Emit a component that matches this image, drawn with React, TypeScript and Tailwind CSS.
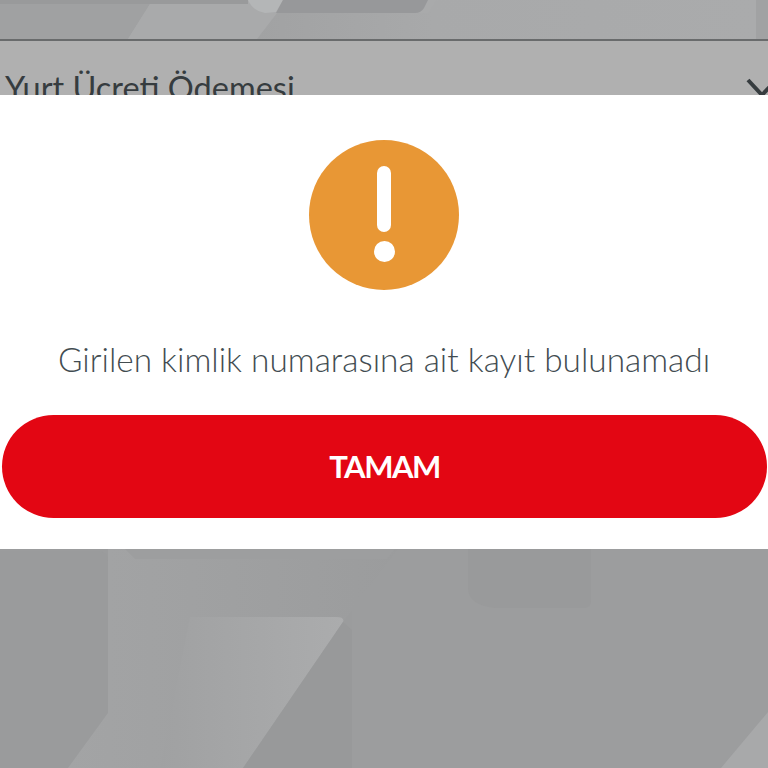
const font = "font-['Lato','Open_Sans',sans-serif]";

function TopPattern() {
  return (
    <svg width="768" height="39" viewBox="0 0 768 39" className="block">
      <defs>
        <linearGradient id="topRight" x1="0" x2="1" y1="0" y2="0">
          <stop offset="0" stopColor="#a1a2a3" />
          <stop offset="0.35" stopColor="#a8a9aa" />
          <stop offset="1" stopColor="#aaabac" />
        </linearGradient>
      </defs>
      <rect width="768" height="39" fill="#a9aaab" />
      <polygon points="0,4 150,4 128,39 0,39" fill="#a0a1a2" />
      <polygon points="150,4 248,4 277,13 257,39 128,39" fill="#a9aaab" />
      <polygon points="277,13 428,13 436,0 756,0 756,39 257,39" fill="url(#topRight)" />
      <path d="M0 0h248v4H0z" fill="#999a9b" />
      <path d="M248 0h35l-7 12-11 1q-12-2-17-13z" fill="#b4b6b7" />
      <path d="M283 0h145l-4 8q-3 5-9 5H276z" fill="#97989a" />
      <path d="M756 0h12v39h-12z" fill="#a1a2a3" />
    </svg>
  );
}

function BottomPattern() {
  return (
    <svg width="768" height="219" viewBox="0 0 768 219" className="block">
      <defs>
        <linearGradient id="tile" x1="0" x2="1" y1="0" y2="0">
          <stop offset="0" stopColor="#a0a1a2" />
          <stop offset="1" stopColor="#abacad" />
        </linearGradient>
        <linearGradient id="band" x1="0" x2="1" y1="0" y2="0">
          <stop offset="0" stopColor="#a3a4a5" />
          <stop offset="1" stopColor="#9b9c9d" />
        </linearGradient>
      </defs>
      <rect width="768" height="219" fill="#9b9c9d" />
      <path d="M0 0h768v219H352V0z" fill="#9c9d9e" />
      <path d="M0 2h98q10 0 10 10v152l-32 55H0z" fill="#9a9b9c" />
      <path d="M108 0h290l-55 73-3 146H68l40-55z" fill="url(#band)" />
      <path d="M125 0h270l-8 10H135z" fill="#9d9e9f" />
      <path d="M190 68h146q9 0 7 5l-100 146h-83z" fill="url(#tile)" />
      <path d="M343 73l9 8v138H243z" fill="#98999a" />
      <path d="M468 0h123v52q0 6-6 7l-90 0q-27-3-27-20z" fill="#999a9b" />
      <path d="M768 163v56h-47z" fill="#a8a9aa" />
    </svg>
  );
}

export default function App() {
  return (
    <div className={`w-[768px] h-[768px] overflow-hidden flex flex-col bg-white ${font}`}>
      <TopPattern />
      <div className="h-[2px] bg-[#696b6c]" />
      <div className="h-[54px] bg-[#b0b0b0] overflow-hidden flex justify-between pl-[5px]">
        <span className="text-[32.5px] leading-[40px] mt-[27px] text-[#363c3f] whitespace-nowrap">
          Yurt Ücreti Ödemesi
        </span>
        <svg width="22" height="20" viewBox="0 0 22 20" className="mt-[37px] shrink-0">
          <path d="M2 2l14 15L30 2" fill="none" stroke="#363c3f" strokeWidth="4" />
        </svg>
      </div>

      <div className="h-[454px] flex flex-col items-center">
        <div className="mt-[45px] w-[150px] h-[150px] rounded-full bg-[#e89735] flex flex-col items-center">
          <div className="mt-[26px] w-[14px] h-[66px] rounded-full bg-white" />
          <div className="mt-[9px] w-[21px] h-[21px] rounded-full bg-white" />
        </div>
        <p className="mt-[50px] text-[33.4px] leading-[38px] font-light text-[#424c51] whitespace-nowrap">
          Girilen kimlik numarasına ait kayıt bulunamadı
        </p>
        <button className="mt-[37px] ml-[1px] w-[765px] h-[103px] rounded-[52px] bg-[#e30613] text-white text-[31px] font-bold tracking-[-1.5px]">
          TAMAM
        </button>
      </div>

      <BottomPattern />
    </div>
  );
}
